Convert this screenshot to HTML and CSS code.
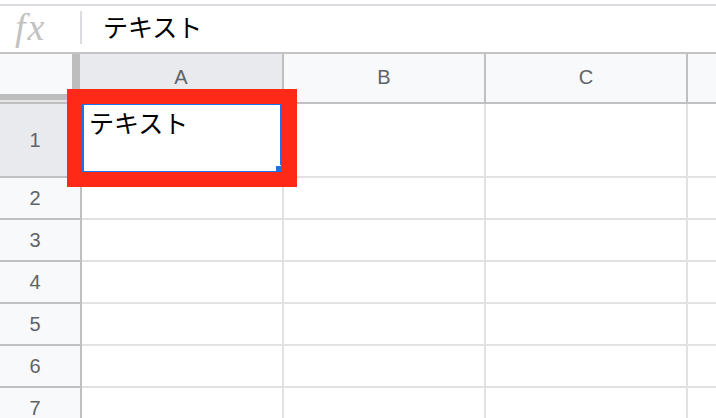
FILE: index.html
```html
<!DOCTYPE html>
<html lang="ja">
<head>
<meta charset="utf-8">
<link rel="stylesheet" href="styles.css">
</head>
<body>
<div class="topline"></div>
<div class="formula">
  <span class="fx">fx</span>
  <span class="fsep"></span>
  <span class="ftext">テキスト</span>
</div>
<div class="sheet">
  <div class="hrow">
    <div class="corner"></div>
    <div class="ch ch-a sel">A</div>
    <div class="ch">B</div>
    <div class="ch">C</div>
    <div class="ch ch-last"></div>
  </div>
  <div class="row row-1">
    <div class="rh sel">1</div>
    <div class="cell cell-a"><span class="ctext">テキスト</span></div>
    <div class="cell"></div>
    <div class="cell"></div>
    <div class="cell cell-last"></div>
  </div>
  <div class="row"><div class="rh">2</div><div class="cell"></div><div class="cell"></div><div class="cell"></div><div class="cell cell-last"></div></div>
  <div class="row"><div class="rh">3</div><div class="cell"></div><div class="cell"></div><div class="cell"></div><div class="cell cell-last"></div></div>
  <div class="row"><div class="rh">4</div><div class="cell"></div><div class="cell"></div><div class="cell"></div><div class="cell cell-last"></div></div>
  <div class="row"><div class="rh">5</div><div class="cell"></div><div class="cell"></div><div class="cell"></div><div class="cell cell-last"></div></div>
  <div class="row"><div class="rh">6</div><div class="cell"></div><div class="cell"></div><div class="cell"></div><div class="cell cell-last"></div></div>
  <div class="row"><div class="rh">7</div><div class="cell"></div><div class="cell"></div><div class="cell"></div><div class="cell cell-last"></div></div>
</div>
<div class="selection"><span class="handle"></span></div>
<div class="redbox"></div>
</body>
</html>
```
FILE: styles.css
```css
html, body {
  margin: 0;
  padding: 0;
  background: #ffffff;
  width: 716px;
  height: 418px;
  overflow: hidden;
}
body {
  position: relative;
  font-family: "Liberation Sans", Arial, sans-serif;
}
.topline {
  height: 2px;
  margin-top: 4px;
  background: #dadce0;
}
.formula {
  height: 46px;
  display: flex;
  align-items: center;
  border-bottom: 2px solid #c4c4c4;
}
.fx {
  width: 80px;
  box-sizing: border-box;
  padding-left: 15px;
  font-family: "Liberation Serif", "Times New Roman", serif;
  font-style: italic;
  font-size: 38px;
  letter-spacing: 2px;
  color: #c2c2c2;
  line-height: 1;
  margin-top: -4px;
}
.fsep {
  width: 2px;
  height: 33px;
  background: #dadce0;
  margin-top: -4px;
}
.ftext {
  margin-left: 21px;
  font-family: "Noto Sans CJK JP", sans-serif;
  font-size: 25px;
  line-height: 1;
  color: #000;
  margin-top: -5px;
}
.sheet {
  display: flex;
  flex-direction: column;
}
.hrow {
  display: flex;
  height: 50px;
}
.corner {
  width: 80px;
  flex: none;
  box-sizing: border-box;
  background: #f8f9fa;
  border-right: 8px solid #bdbdbd;
  border-bottom: 2px solid #c0c0c0;
  box-shadow: inset 0 -2px 0 #e4e4e4, inset 0 -8px 0 #bdbdbd;
}
.ch {
  width: 202px;
  flex: none;
  box-sizing: border-box;
  background: #f8f9fa;
  border-right: 2px solid #c0c0c0;
  border-bottom: 2px solid #c0c0c0;
  display: flex;
  align-items: center;
  justify-content: center;
  font-size: 20px;
  color: #5f6368;
  padding-bottom: 2px;
}
.ch-a {
  width: 204px;
}
.ch-last {
  flex: 1;
  border-right: none;
}
.ch.sel, .rh.sel {
  background: #e8eaed;
}
.row {
  display: flex;
  height: 42px;
}
.row-1 {
  height: 74px;
}
.rh {
  width: 82px;
  flex: none;
  box-sizing: border-box;
  background: #f8f9fa;
  border-right: 2px solid #c0c0c0;
  border-bottom: 2px solid #c0c0c0;
  display: flex;
  align-items: center;
  justify-content: center;
  font-size: 20px;
  color: #5f6368;
  padding-right: 10px;
}
.cell {
  width: 202px;
  flex: none;
  box-sizing: border-box;
  border-right: 2px solid #e2e2e2;
  border-bottom: 2px solid #e2e2e2;
}
.cell-last {
  flex: 1;
  border-right: none;
}
.cell-a {
  padding: 6px 0 0 7px;
}
.ctext {
  font-family: "Noto Sans CJK JP", sans-serif;
  font-size: 25px;
  line-height: 1;
  color: #000;
}
.selection {
  position: absolute;
  left: 82px;
  top: 103px;
  width: 200px;
  height: 70px;
  box-sizing: border-box;
  border: 2px solid #1a73e8;
}
.handle {
  position: absolute;
  right: -2px;
  bottom: -1px;
  width: 6px;
  height: 6px;
  background: #1a73e8;
  box-shadow: -1px -1px 0 #ffffff;
}
.redbox {
  position: absolute;
  left: 67px;
  top: 89px;
  width: 230px;
  height: 98px;
  box-sizing: border-box;
  border: 15px solid #fe2a17;
}
```
